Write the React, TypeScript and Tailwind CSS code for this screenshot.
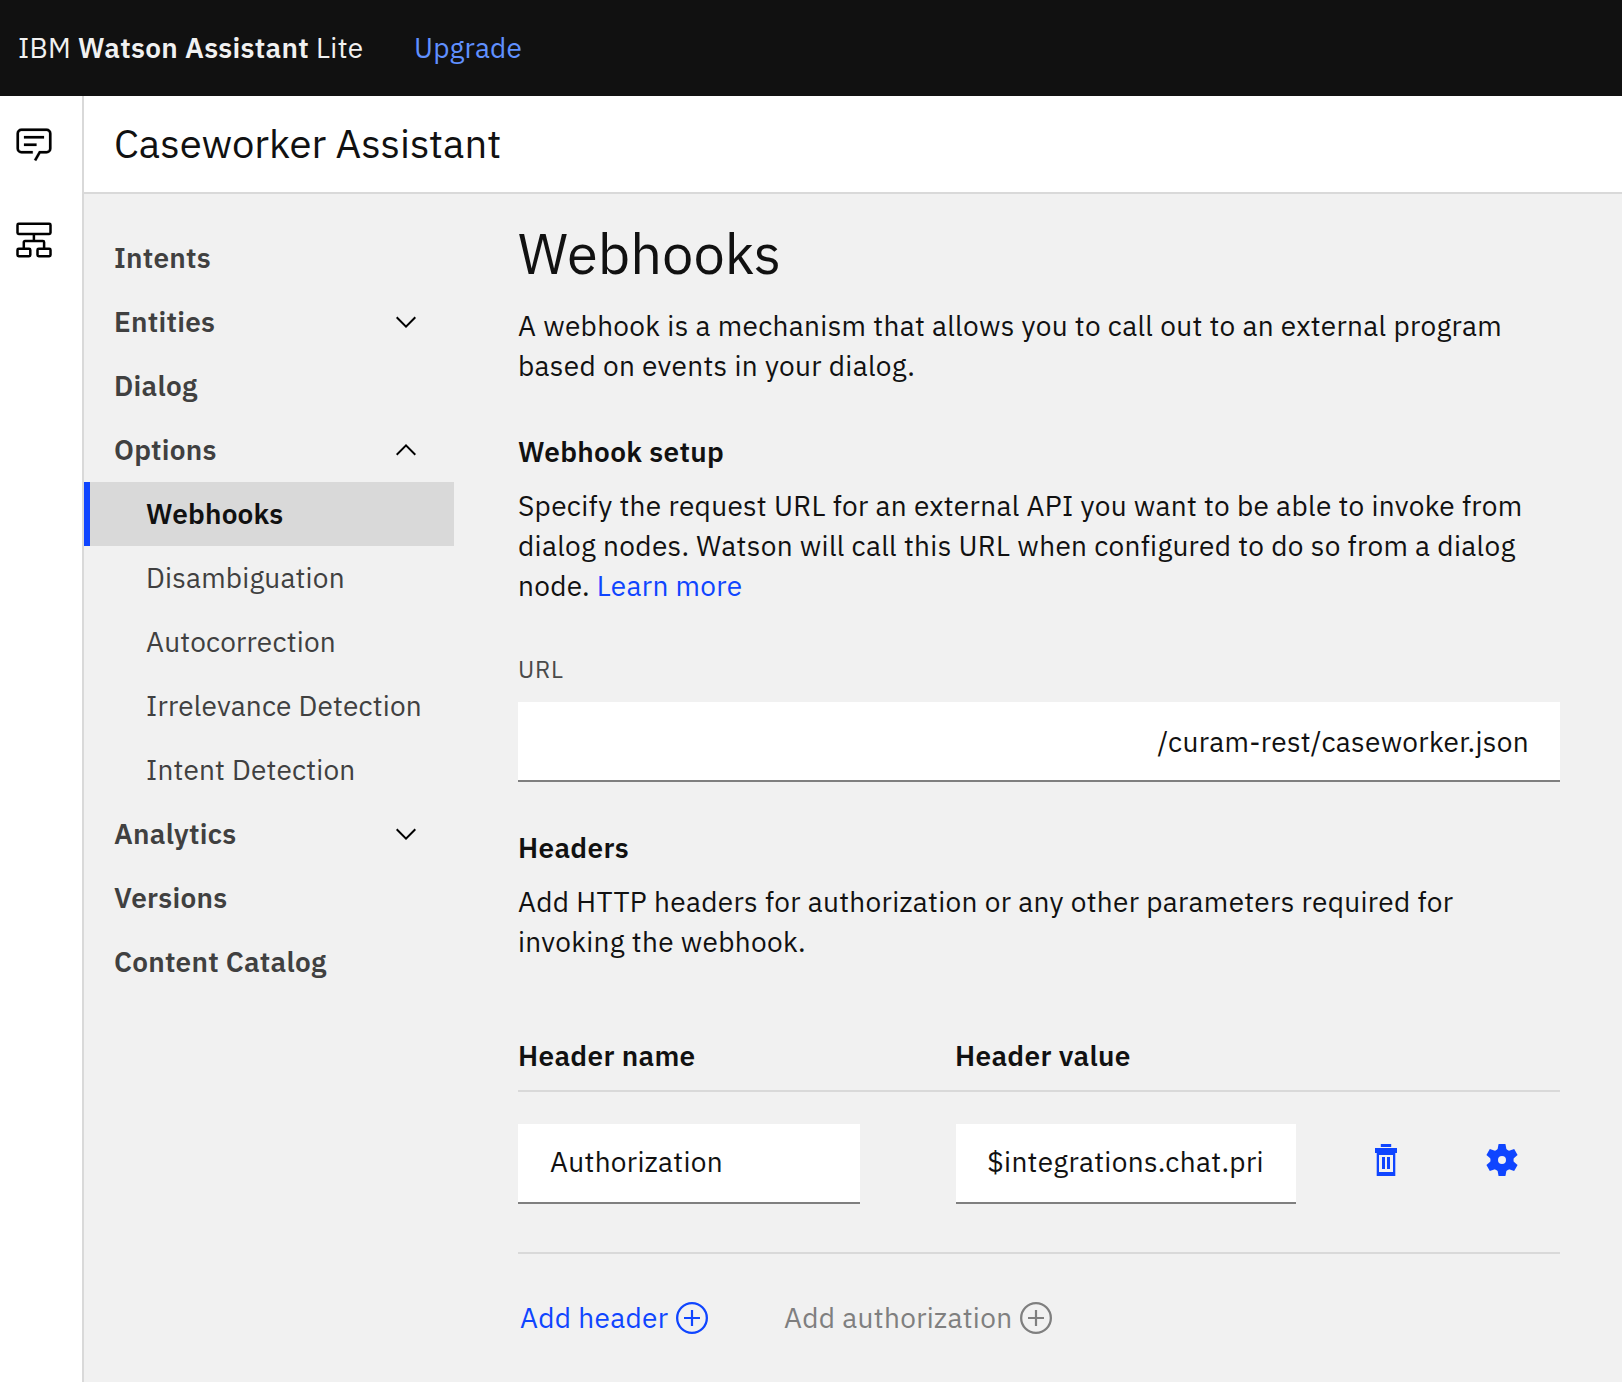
import React from "react";

type NavEntry = {
  label: string;
  state?: "open" | "closed";
  children?: { label: string; selected?: boolean }[];
};

const NAV: NavEntry[] = [
  { label: "Intents" },
  { label: "Entities", state: "closed" },
  { label: "Dialog" },
  {
    label: "Options",
    state: "open",
    children: [
      { label: "Webhooks", selected: true },
      { label: "Disambiguation" },
      { label: "Autocorrection" },
      { label: "Irrelevance Detection" },
      { label: "Intent Detection" },
    ],
  },
  { label: "Analytics", state: "closed" },
  { label: "Versions" },
  { label: "Content Catalog" },
];

function ChatIcon() {
  return (
    <svg width="40" height="40" viewBox="0 0.4 32 32" fill="#000" stroke="#000" strokeWidth="0.15">
      <path d="M17.74 30 16 29l4-7h6a2 2 0 0 0 2-2V8a2 2 0 0 0-2-2H6a2 2 0 0 0-2 2v12a2 2 0 0 0 2 2h9v2H6a4 4 0 0 1-4-4V8a4 4 0 0 1 4-4h20a4 4 0 0 1 4 4v12a4 4 0 0 1-4 4h-4.84Z" />
      <path d="M8 10h16v2H8zM8 16h10v2H8z" />
    </svg>
  );
}

function FlowIcon() {
  return (
    <svg width="40" height="40" viewBox="0 0 40 40" fill="none" stroke="#000" strokeWidth="2.5">
      <rect x="3.5" y="3.7" width="33" height="10.2" rx="1.2" />
      <rect x="3.5" y="28.7" width="12.8" height="7.6" rx="1.2" />
      <rect x="23.5" y="28.7" width="13" height="7.6" rx="1.2" />
      <path d="M19.9 14v7M9.8 28.5v-6.2a1.2 1.2 0 0 1 1.2-1.2h17.9a1.2 1.2 0 0 1 1.2 1.2v6.2" />
    </svg>
  );
}

function Chevron({ up }: { up?: boolean }) {
  return (
    <svg width="32" height="32" viewBox="0 0 16 16" fill="#000">
      <path d={up ? "M8 5l5 5-.7.7L8 6.4l-4.3 4.3L3 10z" : "M8 11L3 6l.7-.7L8 9.6l4.3-4.3.7.7z"} />
    </svg>
  );
}

function TrashIcon() {
  return (
    <svg width="22" height="32" viewBox="0 0 22 32" fill="#0f45ff">
      <path d="M5.8 0h10.4v3H5.8zM0 4h22v5H0z" />
      <path fillRule="evenodd" d="M1.7 9h18.6v23H1.7zM4 11v17h14V11z" />
      <path d="M7 13h3v12H7zM12 13h3v12h-3z" />
    </svg>
  );
}

function GearIcon() {
  return (
    <svg width="32" height="32" viewBox="-16 -16 32 32" fill="#0f45ff">
      <path
        fillRule="evenodd"
        d="M0-11.6a11.6 11.6 0 1 1 0 23.2a11.6 11.6 0 1 1 0-23.2zM0-4a4 4 0 1 0 0 8a4 4 0 1 0 0-8z"
      />
      {[0, 60, 120, 180, 240, 300].map((a) => (
        <path key={a} d="M-3.4-16H3.4L4.6-10H-4.6z" transform={`rotate(${a})`} />
      ))}
    </svg>
  );
}

function AddIcon() {
  return (
    <svg width="32" height="32" viewBox="0 0 32 32" fill="none" stroke="currentColor" strokeWidth="2.3">
      <circle cx="16" cy="16" r="14.85" />
      <path d="M16 8v16M8 16h16" strokeWidth="2.2" />
    </svg>
  );
}

function NavItem({ entry }: { entry: NavEntry }) {
  return (
    <li>
      <div className="flex h-16 items-center justify-between pr-8 pl-[30px] font-semibold tracking-[0.26px] text-[#404040]">
        {entry.label}
        {entry.state && <Chevron up={entry.state === "open"} />}
      </div>
      {entry.children && (
        <ul>
          {entry.children.map((c) => (
            <li
              key={c.label}
              className={
                c.selected
                  ? "flex h-16 items-center border-l-[6px] border-[#0f45ff] bg-[#d9d9d9] pl-14 font-semibold text-[#111111]"
                  : "flex h-16 items-center pl-[62px] text-[#404040]"
              }
            >
              {c.label}
            </li>
          ))}
        </ul>
      )}
    </li>
  );
}

export default function App() {
  return (
    <div className="flex h-[1382px] w-[1622px] flex-col overflow-hidden bg-[#f1f1f1] font-['IBM_Plex_Sans',Roboto,sans-serif] text-[28px] leading-10 tracking-[0.32px] text-[#111111]">
      <header className="flex h-24 shrink-0 items-center bg-[#111111] pl-[18px] text-[#f1f1f1]">
        <p className="w-[396px]">
          IBM <span className="font-semibold">Watson Assistant</span> Lite
        </p>
        <a className="tracking-[0.2px] text-[#6090ff]">Upgrade</a>
      </header>

      <div className="flex min-h-0 flex-1">
        <aside className="flex w-21 shrink-0 flex-col gap-14 border-r-2 border-[#d9d9d9] bg-white pt-7 pl-[14px]">
          <ChatIcon />
          <FlowIcon />
        </aside>

        <div className="flex min-w-0 flex-1 flex-col">
          <div className="flex h-[98px] shrink-0 items-center border-b-2 border-[#d9d9d9] bg-white pl-[30px] pb-0.5">
            <h1 className="text-[40px] leading-[52px] tracking-normal">Caseworker Assistant</h1>
          </div>

          <div className="flex min-h-0 flex-1">
            <nav className="w-[370px] shrink-0 pt-8 tracking-[0.2px]">
              <ul>
                {NAV.map((e) => (
                  <NavItem key={e.label} entry={e} />
                ))}
              </ul>
            </nav>

            <main className="ml-16 w-[1042px] shrink-0 pt-[27px]">
              <h2 className="text-[56px] leading-[64px] tracking-normal">Webhooks</h2>
              <p className="mt-[21px]">
                A webhook is a mechanism that allows you to call out to an external program
                <br />
                based on events in your dialog.
              </p>

              <h3 className="mt-[46px] font-semibold">Webhook setup</h3>
              <p className="mt-[14px]">
                Specify the request URL for an external API you want to be able to invoke from
                <br />
                dialog nodes. Watson will call this URL when configured to do so from a dialog
                <br />
                node. <a className="text-[#0f45ff]">Learn more</a>
              </p>

              <label className="mt-[47px] block text-[24px] leading-8 tracking-[0.64px] text-[#4a4a4a]">URL</label>
              <div className="mt-[17px] flex h-20 items-center justify-end border-b-2 border-[#7f7f7f] bg-white pt-0.5 pr-[31px]">
                /curam-rest/caseworker.json
              </div>

              <h3 className="mt-[46px] font-semibold">Headers</h3>
              <p className="mt-[14px]">
                Add HTTP headers for authorization or any other parameters required for
                <br />
                invoking the webhook.
              </p>

              <div className="mt-[74px] grid grid-cols-[437px_1fr] border-b-2 border-[#d9d9d9] pb-3.5 font-semibold">
                <span>Header name</span>
                <span>Header value</span>
              </div>
              <div className="flex h-[162px] items-start border-b-2 border-[#d9d9d9] pt-8">
                <div className="flex h-20 w-[342px] items-center border-b-2 border-[#7f7f7f] bg-white pb-0.5 pl-8">
                  Authorization
                </div>
                <div className="ml-24 flex h-20 w-[340px] items-center border-b-2 border-[#7f7f7f] bg-white pb-0.5 pl-[31px]">
                  $integrations.chat.pri
                </div>
                <div className="flex gap-[89px] pt-5 pl-[79px]">
                  <TrashIcon />
                  <GearIcon />
                </div>
              </div>

              <div className="flex gap-[76px] pt-11 pl-0.5">
                <button className="flex w-[188px] items-center justify-between whitespace-nowrap text-[#0f45ff]">
                  Add header
                  <AddIcon />
                </button>
                <button className="flex w-[268px] items-center justify-between whitespace-nowrap text-[#7f7f7f]">
                  Add authorization
                  <AddIcon />
                </button>
              </div>
            </main>
          </div>
        </div>
      </div>
    </div>
  );
}
